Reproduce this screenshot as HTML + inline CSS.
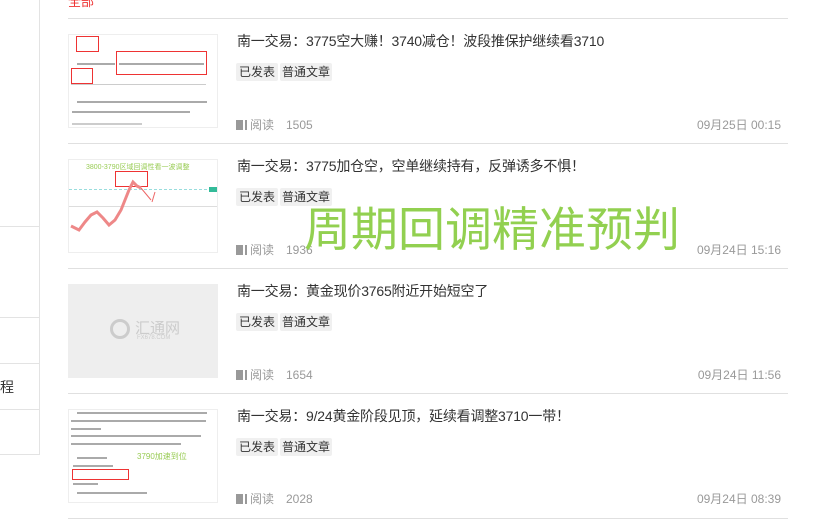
<!DOCTYPE html>
<html><head><meta charset="utf-8"><style>
*{margin:0;padding:0;box-sizing:border-box}
body{width:832px;height:522px;overflow:hidden;background:#fff;font-family:"Liberation Sans","Noto Sans CJK SC",sans-serif;position:relative;color:#333}
.side{position:absolute;left:0;top:-2px;width:40px;height:457px;border-right:1px solid #e3e3e3;border-bottom:1px solid #e3e3e3}
.hl{position:absolute;left:0;width:40px;border-top:1px solid #e3e3e3}
.sep{position:absolute;left:68px;width:720px;border-top:1px solid #e0e0e0}
.thumb{position:absolute;left:68px;width:150px;height:94px;border:1px solid #eee;background:#fff;overflow:hidden}
.title{position:absolute;left:237px;font-size:14px;color:#333;white-space:nowrap;letter-spacing:-0.2px}
.tag{position:absolute;font-size:12px;background:#f0f0f0;color:#333;padding:0;height:18px;line-height:18px;border-radius:2px;text-align:center;white-space:nowrap}
.read{position:absolute;left:236px;font-size:12px;color:#999;white-space:nowrap}
.read i{display:inline-block;width:9px;height:10px;background:#999;vertical-align:-1px;margin-right:5px;border-right:2px solid #fff;box-shadow:2px 0 0 #999}
.date{position:absolute;right:51px;font-size:12px;color:#999}
.big{position:absolute;left:304px;top:196px;font-size:47px;color:#92d050;font-family:"Noto Sans CJK SC",sans-serif;white-space:nowrap;line-height:60px}
.line{position:absolute;height:2px;background:#555;opacity:.5}
.rb{position:absolute;border:1.5px solid #e33}
</style></head><body>
<div class="side"></div>
<div class="hl" style="top:226px"></div>
<div class="hl" style="top:317px"></div>
<div class="hl" style="top:363px"></div>
<div class="hl" style="top:409px"></div>
<div style="position:absolute;left:0;top:377px;font-size:14px;color:#333">程</div>
<div style="position:absolute;left:68px;top:-9px;font-size:13px;color:#e33">全部</div>

<div class="sep" style="top:18px"></div>
<div class="sep" style="top:143px"></div>
<div class="sep" style="top:268px"></div>
<div class="sep" style="top:393px"></div>
<div class="sep" style="top:518px"></div>

<!-- row1 -->
<div class="thumb" style="top:34px">
 <div class="rb" style="left:7px;top:1px;width:23px;height:16px"></div>
 <div class="rb" style="left:47px;top:16px;width:91px;height:24px"></div>
 <div class="rb" style="left:2px;top:33px;width:22px;height:16px"></div>
 <div class="line" style="left:8px;top:28px;width:38px"></div>
 <div class="line" style="left:50px;top:28px;width:85px"></div>
 <div style="position:absolute;left:2px;top:49px;width:135px;border-top:1px solid #ccc"></div>
 <div class="line" style="left:8px;top:66px;width:130px"></div>
 <div class="line" style="left:3px;top:76px;width:118px"></div>
 <div class="line" style="left:3px;top:88px;width:70px;opacity:.3"></div>
</div>
<div class="title" style="top:31px">南一交易：3775空大赚！3740减仓！波段推保护继续看3710</div>
<div class="tag" style="left:236px;top:63px;width:42px">已发表</div><div class="tag" style="left:280px;top:63px;width:52px">普通文章</div>
<div class="read" style="top:116px"><i></i>阅读　1505</div>
<div class="date" style="top:116px">09月25日 00:15</div>

<!-- row2 -->
<div class="thumb" style="top:159px">
 <div style="position:absolute;left:17px;top:2px;font-size:7px;color:#9c5">3800-3790区域回调性看一波调整</div>
 <div class="rb" style="left:46px;top:11px;width:33px;height:16px"></div>
 <div style="position:absolute;left:0;top:29px;width:148px;border-top:1px dashed #9dd"></div>
 <div style="position:absolute;left:0;top:46px;width:148px;border-top:1px solid #ddd"></div>
 <div style="position:absolute;left:140px;top:27px;width:8px;height:5px;background:#3b9"></div>
 <svg style="position:absolute;left:0;top:0" width="150" height="94"><path d="M2 66 L10 70 L16 62 L22 55 L28 52 L34 58 L40 65 L46 60 L52 50 L56 40 L60 30 L64 22 L68 26 L72 28" stroke="#e88" stroke-width="3" fill="none"/><path d="M72 28 L82 40 M83 42 L86 32" stroke="#e66" stroke-width="1" fill="none"/></svg>
</div>
<div class="title" style="top:156px">南一交易：3775加仓空，空单继续持有，反弹诱多不惧！</div>
<div class="tag" style="left:236px;top:188px;width:42px">已发表</div><div class="tag" style="left:280px;top:188px;width:52px">普通文章</div>
<div class="read" style="top:241px"><i></i>阅读　1936</div>
<div class="date" style="top:241px">09月24日 15:16</div>

<!-- row3 -->
<div class="thumb" style="top:284px;background:#eee;border-color:#eee">
 <div style="position:absolute;left:41px;top:34px;width:20px;height:20px;border:3px solid #ccc;border-radius:50%"></div>
 <div style="position:absolute;left:66px;top:32px;font-size:15px;color:#ccc">汇通网</div>
 <div style="position:absolute;left:68px;top:50px;font-size:6px;color:#ccc">FX678.COM</div>
</div>
<div class="title" style="top:281px">南一交易：黄金现价3765附近开始短空了</div>
<div class="tag" style="left:236px;top:313px;width:42px">已发表</div><div class="tag" style="left:280px;top:313px;width:52px">普通文章</div>
<div class="read" style="top:366px"><i></i>阅读　1654</div>
<div class="date" style="top:366px">09月24日 11:56</div>

<!-- row4 -->
<div class="thumb" style="top:409px">
 <div class="line" style="left:8px;top:2px;width:130px"></div>
 <div class="line" style="left:2px;top:10px;width:135px"></div>
 <div class="line" style="left:2px;top:18px;width:30px"></div>
 <div class="line" style="left:2px;top:25px;width:130px"></div>
 <div class="line" style="left:2px;top:33px;width:110px"></div>
 <div style="position:absolute;left:68px;top:41px;font-size:8px;color:#9c5">3790加速到位</div>
 <div class="line" style="left:8px;top:47px;width:30px"></div>
 <div class="line" style="left:4px;top:55px;width:40px"></div>
 <div class="rb" style="left:3px;top:59px;width:57px;height:11px"></div>
 <div class="line" style="left:4px;top:73px;width:25px"></div>
 <div class="line" style="left:8px;top:82px;width:70px"></div>
</div>
<div class="title" style="top:406px">南一交易：9/24黄金阶段见顶，延续看调整3710一带！</div>
<div class="tag" style="left:236px;top:438px;width:42px">已发表</div><div class="tag" style="left:280px;top:438px;width:52px">普通文章</div>
<div class="read" style="top:490px"><i></i>阅读　2028</div>
<div class="date" style="top:490px">09月24日 08:39</div>

<div class="big">周期回调精准预判</div>
</body></html>
